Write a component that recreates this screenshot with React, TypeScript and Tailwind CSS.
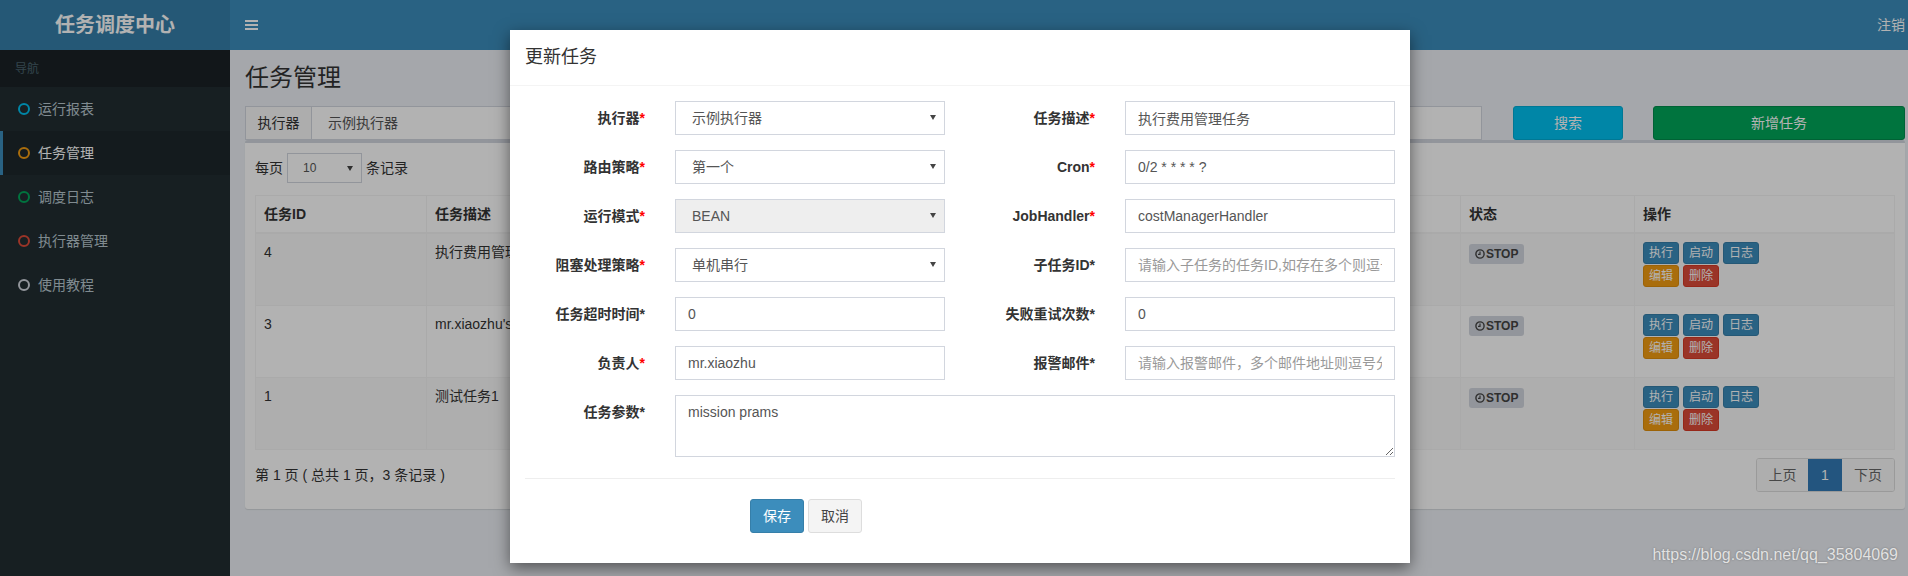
import React from 'react';

const navItems = [
  { label: '运行报表', ring: 'border-[#00c0ef]', active: false },
  { label: '任务管理', ring: 'border-[#f39c12]', active: true },
  { label: '调度日志', ring: 'border-[#00a65a]', active: false },
  { label: '执行器管理', ring: 'border-[#dd4b39]', active: false },
  { label: '使用教程', ring: 'border-[#d2d6de]', active: false },
];

const colWidths = ['w-[171px]', 'w-[273px]', 'w-[250px]', 'w-[250px]', 'w-[261px]', 'w-[174px]'];

const rows = [
  { id: '4', desc: '执行费用管理任务' },
  { id: '3', desc: "mr.xiaozhu's任务" },
  { id: '1', desc: '测试任务1' },
];

function Tri({ className }: { className: string }) {
  return (
    <svg className={className} width="6" height="5" viewBox="0 0 6 5">
      <path d="M0 0H6L3 5Z" fill="#444" />
    </svg>
  );
}

function FakeSelect({ value, disabled }: { value: string; disabled?: boolean }) {
  return (
    <div
      className={
        disabled
          ? 'relative h-[34px] border border-[#d2d6de] bg-[#eeeeee] pl-[16px] flex items-center text-[#555]'
          : 'relative h-[34px] border border-[#d2d6de] bg-white pl-[16px] flex items-center text-[#555]'
      }
    >
      {value}
      <Tri className="absolute right-[8px] top-[13px]" />
    </div>
  );
}

function TextInput({ value, placeholder }: { value?: string; placeholder?: string }) {
  return (
    <input
      className="block w-full h-[34px] border border-[#d2d6de] bg-white px-[12px] text-[14px] text-[#555] placeholder:text-[#999] outline-none"
      defaultValue={value}
      placeholder={placeholder}
    />
  );
}

function Label({ text, red }: { text: string; red: boolean }) {
  return (
    <label className="w-[150px] shrink-0 pr-[15px] pt-[7px] text-right font-bold text-[#333] leading-[20px]">
      {text}
      <span className={red ? 'text-[#ff0000]' : 'text-[#333]'}>*</span>
    </label>
  );
}

function Clock() {
  return (
    <svg width="10" height="10" viewBox="0 0 10 10" className="mr-[1px]">
      <circle cx="5" cy="5" r="4.1" fill="none" stroke="#444" strokeWidth="1.4" />
      <path d="M5 2.6V5.3H3" fill="none" stroke="#444" strokeWidth="1.2" />
    </svg>
  );
}

function ActionBtn({ text, kind }: { text: string; kind: 'p' | 'w' | 'd' }) {
  const cls =
    kind === 'p'
      ? 'h-[22px] w-[36px] rounded-[3px] text-[12px] leading-[20px] text-white bg-[#3c8dbc] border border-[#367fa9] flex items-center justify-center'
      : kind === 'w'
      ? 'h-[22px] w-[36px] rounded-[3px] text-[12px] leading-[20px] text-white bg-[#f39c12] border border-[#e08e0b] flex items-center justify-center'
      : 'h-[22px] w-[36px] rounded-[3px] text-[12px] leading-[20px] text-white bg-[#dd4b39] border border-[#d73925] flex items-center justify-center';
  return <span className={cls}>{text}</span>;
}

function Modal() {
  return (
    <div className="absolute left-[510px] top-[30px] w-[900px] bg-white shadow-[0_5px_15px_rgba(0,0,0,0.5)] z-20">
      <div className="p-[15px] border-b border-[#f4f4f4]">
        <h4 className="text-[18px] leading-[25px] text-[#333]">更新任务</h4>
      </div>
      <div className="pt-[15px] pb-[30px]">
        <div className="flex mb-[15px]">
          <Label text="执行器" red />
          <div className="w-[300px] px-[15px]"><FakeSelect value="示例执行器" /></div>
          <Label text="任务描述" red />
          <div className="w-[300px] px-[15px]"><TextInput value="执行费用管理任务" /></div>
        </div>
        <div className="flex mb-[15px]">
          <Label text="路由策略" red />
          <div className="w-[300px] px-[15px]"><FakeSelect value="第一个" /></div>
          <Label text="Cron" red />
          <div className="w-[300px] px-[15px]"><TextInput value="0/2 * * * * ?" /></div>
        </div>
        <div className="flex mb-[15px]">
          <Label text="运行模式" red />
          <div className="w-[300px] px-[15px]"><FakeSelect value="BEAN" disabled /></div>
          <Label text="JobHandler" red />
          <div className="w-[300px] px-[15px]"><TextInput value="costManagerHandler" /></div>
        </div>
        <div className="flex mb-[15px]">
          <Label text="阻塞处理策略" red />
          <div className="w-[300px] px-[15px]"><FakeSelect value="单机串行" /></div>
          <Label text="子任务ID" red={false} />
          <div className="w-[300px] px-[15px]"><TextInput placeholder="请输入子任务的任务ID,如存在多个则逗号分隔" /></div>
        </div>
        <div className="flex mb-[15px]">
          <Label text="任务超时时间" red={false} />
          <div className="w-[300px] px-[15px]"><TextInput value="0" /></div>
          <Label text="失败重试次数" red={false} />
          <div className="w-[300px] px-[15px]"><TextInput value="0" /></div>
        </div>
        <div className="flex mb-[15px]">
          <Label text="负责人" red />
          <div className="w-[300px] px-[15px]"><TextInput value="mr.xiaozhu" /></div>
          <Label text="报警邮件" red={false} />
          <div className="w-[300px] px-[15px]"><TextInput placeholder="请输入报警邮件，多个邮件地址则逗号分隔" /></div>
        </div>
        <div className="flex">
          <Label text="任务参数" red={false} />
          <div className="w-[750px] px-[15px]">
            <textarea
              className="block w-full h-[62px] border border-[#d2d6de] px-[12px] py-[6px] text-[14px] leading-[20px] text-[#555] outline-none"
              defaultValue="mission prams"
            />
          </div>
        </div>
        <div className="mx-[15px] mt-[21px] border-t border-[#eeeeee]" />
        <div className="mt-[20px] pl-[240px] flex gap-[4px]">
          <button className="h-[34px] w-[54px] rounded-[3px] bg-[#3c8dbc] border border-[#367fa9] text-white">保存</button>
          <button className="h-[34px] w-[54px] rounded-[3px] bg-[#f4f4f4] border border-[#dddddd] text-[#444]">取消</button>
        </div>
      </div>
    </div>
  );
}

export default function App() {
  return (
    <div className="relative w-[1908px] h-[576px] overflow-hidden font-['Liberation_Sans','Noto_Sans_CJK_SC',sans-serif] text-[14px] leading-[20px] text-[#333]">
      <div className="flex flex-col h-full">
        <header className="flex h-[50px] shrink-0">
          <div className="w-[230px] bg-[#367fa9] flex items-center justify-center text-white text-[20px] font-bold">
            任务调度中心
          </div>
          <div className="flex-1 bg-[#3c8dbc] flex items-center justify-between">
            <div className="ml-[15px] flex flex-col gap-[2px]">
              <span className="block w-[13px] h-[2px] bg-white" />
              <span className="block w-[13px] h-[2px] bg-white" />
              <span className="block w-[13px] h-[2px] bg-white" />
            </div>
            <span className="mr-[3px] text-white">注销</span>
          </div>
        </header>
        <div className="flex flex-1 min-h-0">
          <aside className="w-[230px] shrink-0 bg-[#222d32]">
            <div className="h-[37px] bg-[#1a2226] pl-[15px] flex items-center text-[12px] text-[#4b646f]">导航</div>
            {navItems.map((n) => (
              <div
                key={n.label}
                className={
                  n.active
                    ? 'h-[44px] flex items-center border-l-[3px] border-[#3c8dbc] bg-[#1e282c] pl-[15px] text-white'
                    : 'h-[44px] flex items-center border-l-[3px] border-transparent pl-[15px] text-[#b8c7ce]'
                }
              >
                <span className={`block w-[12px] h-[12px] rounded-full border-2 ${n.ring}`} />
                <span className="ml-[8px]">{n.label}</span>
              </div>
            ))}
          </aside>
          <main className="flex-1 bg-[#ecf0f5] pt-[15px] pl-[15px] pr-[3px]">
            <h1 className="text-[24px] leading-[26px] font-normal text-[#333]">任务管理</h1>
            <div className="mt-[15px] flex h-[34px]">
              <div className="w-[392px] flex">
                <span className="w-[67px] border border-[#d2d6de] bg-[#f8f8f8] flex items-center justify-center">执行器</span>
                <div className="relative flex-1 border border-l-0 border-[#d2d6de] bg-white pl-[16px] flex items-center text-[#555]">
                  示例执行器
                  <Tri className="absolute right-[8px] top-[13px]" />
                </div>
              </div>
              <div className="ml-[30px] w-[392px] flex">
                <span className="w-[80px] border border-[#d2d6de] bg-[#f8f8f8]" />
                <div className="flex-1 border border-l-0 border-[#d2d6de] bg-white" />
              </div>
              <div className="ml-[30px] w-[393px] flex">
                <span className="w-[90px] border border-[#d2d6de] bg-[#f8f8f8]" />
                <div className="flex-1 border border-l-0 border-[#d2d6de] bg-white" />
              </div>
              <button className="ml-[31px] w-[110px] h-[34px] rounded-[3px] bg-[#00c0ef] border border-[#00acd6] text-white">搜索</button>
              <button className="ml-[30px] w-[252px] h-[34px] rounded-[3px] bg-[#00a65a] border border-[#008d4c] text-white">新增任务</button>
            </div>
            <div className="bg-white border-t-[3px] border-[#d2d6de] rounded-[3px] shadow-[0_1px_1px_rgba(0,0,0,0.1)] p-[10px]">
              <div className="flex items-center h-[30px]">
                <span>每页</span>
                <div className="relative ml-[4px] w-[75px] h-[30px] border border-[#d2d6de] bg-white flex items-center pl-[15px] text-[12px] text-[#555]">
                  10
                  <Tri className="absolute right-[8px] top-[12px]" />
                </div>
                <span className="ml-[4px]">条记录</span>
              </div>
              <div className="mt-[12px] border-x border-t border-[#f4f4f4]">
                <div className="flex h-[38px] border-b-2 border-[#f4f4f4] font-bold">
                  {['任务ID', '任务描述', '', '', '', '状态'].map((h, i) => (
                    <div key={i} className={`${colWidths[i]} shrink-0 border-r border-[#f4f4f4] px-[8px] flex items-center`}>
                      {h}
                    </div>
                  ))}
                  <div className="flex-1 px-[8px] flex items-center">操作</div>
                </div>
                {rows.map((r, ri) => (
                  <div
                    key={r.id}
                    className={
                      ri % 2 === 0
                        ? 'flex h-[72px] border-b border-[#f4f4f4] bg-[#f9f9f9]'
                        : 'flex h-[72px] border-b border-[#f4f4f4] bg-white'
                    }
                  >
                    <div className="w-[171px] shrink-0 border-r border-[#f4f4f4] px-[8px] pt-[8px]">{r.id}</div>
                    <div className="w-[273px] shrink-0 border-r border-[#f4f4f4] px-[8px] pt-[8px] whitespace-nowrap">{r.desc}</div>
                    <div className="w-[250px] shrink-0 border-r border-[#f4f4f4]" />
                    <div className="w-[250px] shrink-0 border-r border-[#f4f4f4]" />
                    <div className="w-[261px] shrink-0 border-r border-[#f4f4f4]" />
                    <div className="w-[174px] shrink-0 border-r border-[#f4f4f4] px-[8px] pt-[10px]">
                      <span className="inline-flex items-center h-[20px] px-[6px] rounded-[3px] bg-[#d2d6de] text-[#444] text-[12px] font-bold">
                        <Clock />
                        STOP
                      </span>
                    </div>
                    <div className="flex-1 px-[8px] pt-[8px] flex flex-col gap-[1px]">
                      <div className="flex gap-[4px]">
                        <ActionBtn text="执行" kind="p" />
                        <ActionBtn text="启动" kind="p" />
                        <ActionBtn text="日志" kind="p" />
                      </div>
                      <div className="flex gap-[4px]">
                        <ActionBtn text="编辑" kind="w" />
                        <ActionBtn text="删除" kind="d" />
                      </div>
                    </div>
                  </div>
                ))}
              </div>
              <div className="mt-[8px] mb-[7px] h-[34px] flex items-center justify-between">
                <span>第 1 页 ( 总共 1 页，3 条记录 )</span>
                <div className="flex h-[34px] border border-[#dddddd] rounded-[3px] overflow-hidden">
                  <span className="w-[51px] bg-[#fafafa] text-[#666] flex items-center justify-center">上页</span>
                  <span className="w-[34px] bg-[#337ab7] text-white flex items-center justify-center">1</span>
                  <span className="w-[52px] bg-[#fafafa] text-[#666] flex items-center justify-center">下页</span>
                </div>
              </div>
            </div>
          </main>
        </div>
      </div>
      <div className="absolute inset-0 bg-black/30 z-10" />
      <Modal />
      <div className="absolute right-[10px] top-[545px] z-30 text-[16px] leading-[20px] text-[#e2e2e2] [text-shadow:0_0_2px_rgba(0,0,0,0.35)]">
        https://blog.csdn.net/qq_35804069
      </div>
    </div>
  );
}
